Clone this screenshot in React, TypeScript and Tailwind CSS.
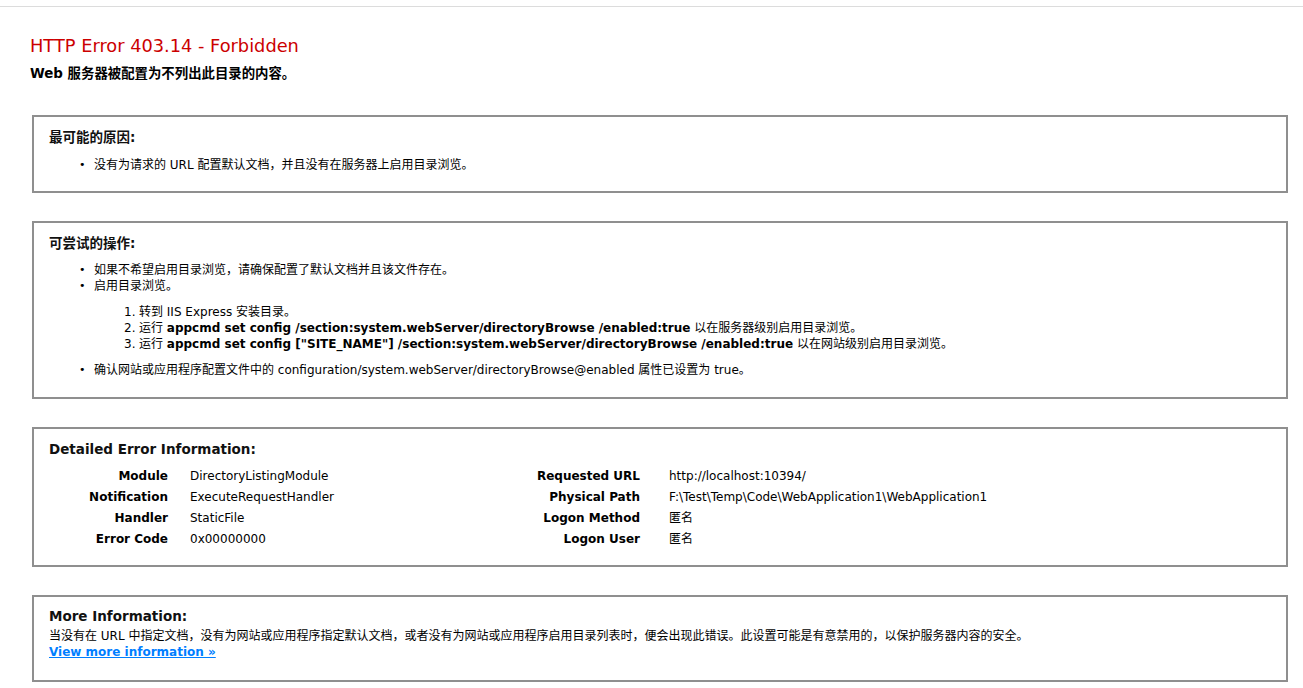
import React from "react";

const font = {
  fontFamily: '"DejaVu Sans", Verdana, "Noto Sans CJK SC", sans-serif',
};

const Box = ({ children, className }: { children: React.ReactNode; className: string }) => (
  <div className={"ml-[32px] w-[1256px] border-2 border-[#8f8f8f] pl-[15px] pr-[15px] " + className}>
    {children}
  </div>
);

const Legend = ({ children }: { children: React.ReactNode }) => (
  <div className="h-[16px] text-[13.5px] font-bold leading-[16px] text-[#111]">{children}</div>
);

const Bullet = ({ children }: { children: React.ReactNode }) => (
  <li className="flex h-[16px] leading-[16px]">
    <span className="w-[15px] shrink-0 text-[11px]">•</span>
    <span>{children}</span>
  </li>
);

const Step = ({ n, children }: { n: number; children: React.ReactNode }) => (
  <li className="flex h-[16px] leading-[16px]">
    <span className="w-[15px] shrink-0">{n}.</span>
    <span>{children}</span>
  </li>
);

const leftRows = [
  ["Module", "DirectoryListingModule"],
  ["Notification", "ExecuteRequestHandler"],
  ["Handler", "StaticFile"],
  ["Error Code", "0x00000000"],
];

const rightRows = [
  ["Requested URL", "http://localhost:10394/"],
  ["Physical Path", "F:\\Test\\Temp\\Code\\WebApplication1\\WebApplication1"],
  ["Logon Method", "匿名"],
  ["Logon User", "匿名"],
];

export default function App() {
  return (
    <div className="min-h-[688px] bg-white text-[12px] text-black" style={font}>
      <div className="h-[6px]" />
      <div className="border-t border-[#dcdcdc]" />

      <div className="pl-[30px] pt-[29px]">
        <h2 className="h-[20px] text-[17.8px] leading-[20px] text-[#cc0000]">HTTP Error 403.14 - Forbidden</h2>
        <h3 className="mt-[10px] h-[16px] text-[13.4px] font-bold leading-[16px]">Web 服务器被配置为不列出此目录的内容。</h3>
      </div>

      <Box className="mt-[33px] pt-[12px] pb-[18px]">
        <Legend>最可能的原因:</Legend>
        <ul className="mt-[12px] pl-[30px]">
          <Bullet>没有为请求的 URL 配置默认文档，并且没有在服务器上启用目录浏览。</Bullet>
        </ul>
      </Box>

      <Box className="mt-[28px] pt-[12px] pb-[19px]">
        <Legend>可尝试的操作:</Legend>
        <ul className="mt-[11px] pl-[30px]">
          <Bullet>如果不希望启用目录浏览，请确保配置了默认文档并且该文件存在。</Bullet>
          <Bullet>启用目录浏览。</Bullet>
        </ul>
        <ol className="mt-[10px] pl-[75px]">
          <Step n={1}>转到 IIS Express 安装目录。</Step>
          <Step n={2}>
            运行 <b>appcmd set config /section:system.webServer/directoryBrowse /enabled:true</b> 以在服务器级别启用目录浏览。
          </Step>
          <Step n={3}>
            运行 <b>appcmd set config ["SITE_NAME"] /section:system.webServer/directoryBrowse /enabled:true</b> 以在网站级别启用目录浏览。
          </Step>
        </ol>
        <ul className="mt-[10px] pl-[30px]">
          <Bullet>确认网站或应用程序配置文件中的 configuration/system.webServer/directoryBrowse@enabled 属性已设置为 true。</Bullet>
        </ul>
      </Box>

      <Box className="mt-[28px] pt-[12px] pb-[15px]">
        <Legend>Detailed Error Information:</Legend>
        <div className="mt-[9px] flex">
          <div className="w-[452px]">
            {leftRows.map(([k, v]) => (
              <div key={k} className="flex h-[21px] items-center leading-[15px]">
                <span className="w-[119px] text-right font-bold">{k}</span>
                <span className="pl-[22px]">{v}</span>
              </div>
            ))}
          </div>
          <div>
            {rightRows.map(([k, v]) => (
              <div key={k} className="flex h-[21px] items-center leading-[15px]">
                <span className="w-[139px] text-right font-bold">{k}</span>
                <span className="pl-[29px]">{v}</span>
              </div>
            ))}
          </div>
        </div>
      </Box>

      <Box className="mt-[28px] pt-[11px] pb-[20px]">
        <Legend>More Information:</Legend>
        <p className="mt-[4px] h-[16px] leading-[16px]">
          当没有在 URL 中指定文档，没有为网站或应用程序指定默认文档，或者没有为网站或应用程序启用目录列表时，便会出现此错误。此设置可能是有意禁用的，以保护服务器内容的安全。
        </p>
        <p className="h-[16px] leading-[16px]">
          <a href="#" className="font-bold text-[#007eff] underline">
            View more information »
          </a>
        </p>
      </Box>
    </div>
  );
}
